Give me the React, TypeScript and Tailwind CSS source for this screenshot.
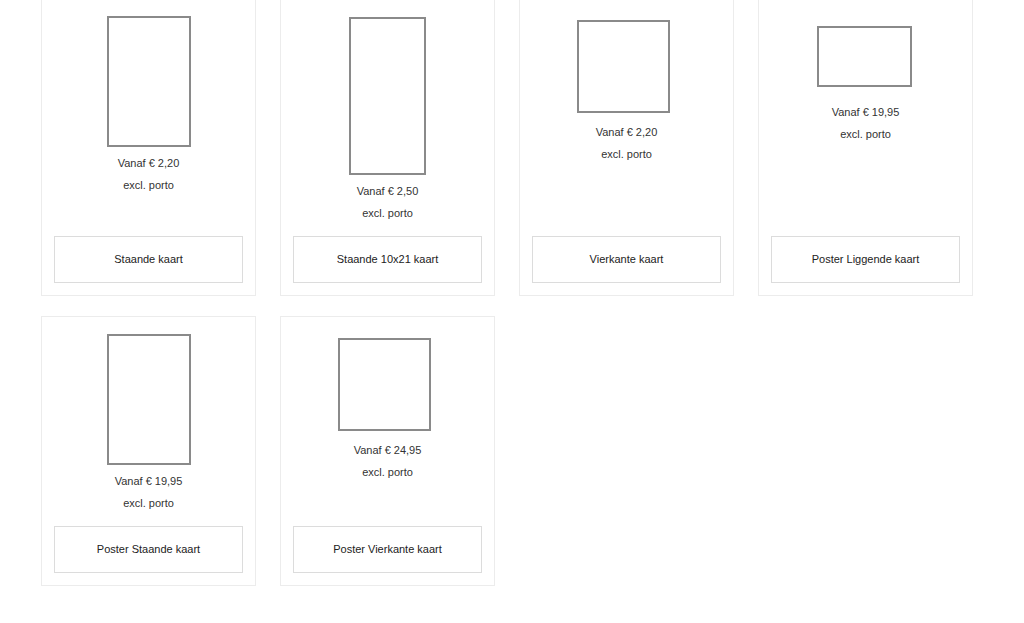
import React from 'react';

type Product = {
  name: string;
  price: string;
  w: number;
  h: number;
  mt: string;
  mb: string;
  shift: string;
};

const products: Product[] = [
  { name: 'Staande kaart', price: 'Vanaf € 2,20', w: 84, h: 131, mt: 'mt-[17px]', mb: 'mb-[5px]', shift: '' },
  { name: 'Staande 10x21 kaart', price: 'Vanaf € 2,50', w: 77, h: 158, mt: 'mt-[18px]', mb: 'mb-[5px]', shift: '' },
  { name: 'Vierkante kaart', price: 'Vanaf € 2,20', w: 93, h: 93, mt: 'mt-[21px]', mb: 'mb-[8px]', shift: 'mr-[6px]' },
  { name: 'Poster Liggende kaart', price: 'Vanaf € 19,95', w: 95, h: 61, mt: 'mt-[27px]', mb: 'mb-[14px]', shift: 'mr-[2px]' },
  { name: 'Poster Staande kaart', price: 'Vanaf € 19,95', w: 84, h: 131, mt: 'mt-[17px]', mb: 'mb-[5px]', shift: '' },
  { name: 'Poster Vierkante kaart', price: 'Vanaf € 24,95', w: 93, h: 93, mt: 'mt-[21px]', mb: 'mb-[8px]', shift: 'mr-[6px]' },
];

const ProductCard: React.FC<{ product: Product }> = ({ product }) => {
  return (
    <div className="flex flex-col items-center border border-[#ececec] bg-white px-3 pb-3">
      <div
        className={`border-2 border-[#8a8a8a] bg-white ${product.mt} ${product.mb} ${product.shift}`}
        style={{ width: product.w, height: product.h }}
      />
      <p className="text-[11px] leading-[22px] text-[#333]">{product.price}</p>
      <p className="text-[11px] leading-[22px] text-[#333]">excl. porto</p>
      <button className="mt-auto w-full pt-[12px]">
        <span className="flex h-[47px] w-full items-center justify-center border border-[#dcdcdc] text-[11px] text-[#222]">
          {product.name}
        </span>
      </button>
    </div>
  );
};

const App: React.FC = () => {
  return (
    <div className="min-h-screen bg-white" style={{ fontFamily: '"Liberation Sans", Arial, sans-serif' }}>
      <div className="-mt-[2px] ml-[41px] grid w-[932px] grid-cols-4 gap-x-6 gap-y-5">
        {products.map((p) => (
          <ProductCard key={p.name} product={p} />
        ))}
      </div>
    </div>
  );
};

export default App;
